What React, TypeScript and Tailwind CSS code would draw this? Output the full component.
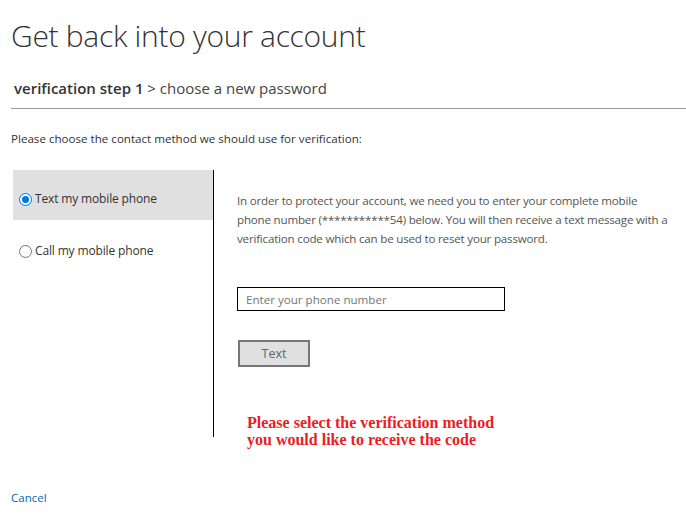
import React from "react";

const sans = "font-['Segoe_UI','Open_Sans',sans-serif]";

function Radio({ checked }: { checked?: boolean }) {
  return (
    <span
      className={`inline-flex h-[13px] w-[13px] shrink-0 items-center justify-center rounded-full border ${
        checked ? "border-[#0078d7] bg-white" : "border-[#767676] bg-white"
      }`}
    >
      {checked && <span className="h-[7px] w-[7px] rounded-full bg-[#0078d7]" />}
    </span>
  );
}

export default function App() {
  return (
    <div className={`h-[532px] w-[686px] overflow-hidden bg-white ${sans} text-[#333]`}>
      <h1 className="pl-[11px] pt-[16px] text-[30px] font-light leading-[40px] tracking-[-0.3px] text-[#333]">
        Get back into your account
      </h1>

      <div className="ml-[11px] mt-[22px] border-b border-[#999] pb-[10px] pl-[3px] text-[15px] leading-[20px]">
        <span className="font-semibold text-[#333]">verification step 1</span>
        <span className="text-[#444]"> &gt; choose a new password</span>
      </div>

      <p className="pl-[11px] pt-[22px] text-[11.6px] leading-[16px] text-[#333]">
        Please choose the contact method we should use for verification:
      </p>

      <div className="mt-[23px] flex">
        {/* methods */}
        <div className="ml-[13px] w-[200px]">
          <label className="flex h-[50px] items-center gap-[3px] bg-[#e0e0e0] pl-[6px] pt-[8px] text-[12px] tracking-[-0.15px]">
            <Radio checked />
            <span>Text my mobile phone</span>
          </label>
          <label className="flex h-[50px] items-center gap-[3px] pl-[6px] pt-[12px] text-[12px] tracking-[-0.15px]">
            <Radio />
            <span>Call my mobile phone</span>
          </label>
        </div>

        {/* detail */}
        <div className="h-[267px] border-l border-black pl-[23px] pt-[21px]">
          <p className="whitespace-nowrap text-[11.6px] leading-[19px] tracking-[-0.2px] text-[#555]">
            In order to protect your account, we need you to enter your complete mobile
            <br />
            phone number (***********54) below. You will then receive a text message with a
            <br />
            verification code which can be used to reset your password.
          </p>

          <input
            placeholder="Enter your phone number"
            className="mt-[39px] block h-[24px] w-[268px] border border-black px-[8px] text-[11.6px] text-[#333] placeholder:text-[#767676]"
          />

          <button className="ml-px mt-[29px] block h-[27px] w-[72px] border-2 border-[#767676] bg-[#e0e0e0] pt-[2px] text-[12.5px] text-[#666]">
            Text
          </button>

          <p className="ml-[10px] mt-[47px] font-['Liberation_Serif',serif] text-[16px] font-bold leading-[17px] text-[#ed1c24]">
            Please select the verification method
            <br />
            you would like to receive the code
          </p>
        </div>
      </div>

      <a href="#" className="ml-[11px] mt-[52px] block text-[11.5px] text-[#0067b8]">
        Cancel
      </a>
    </div>
  );
}
